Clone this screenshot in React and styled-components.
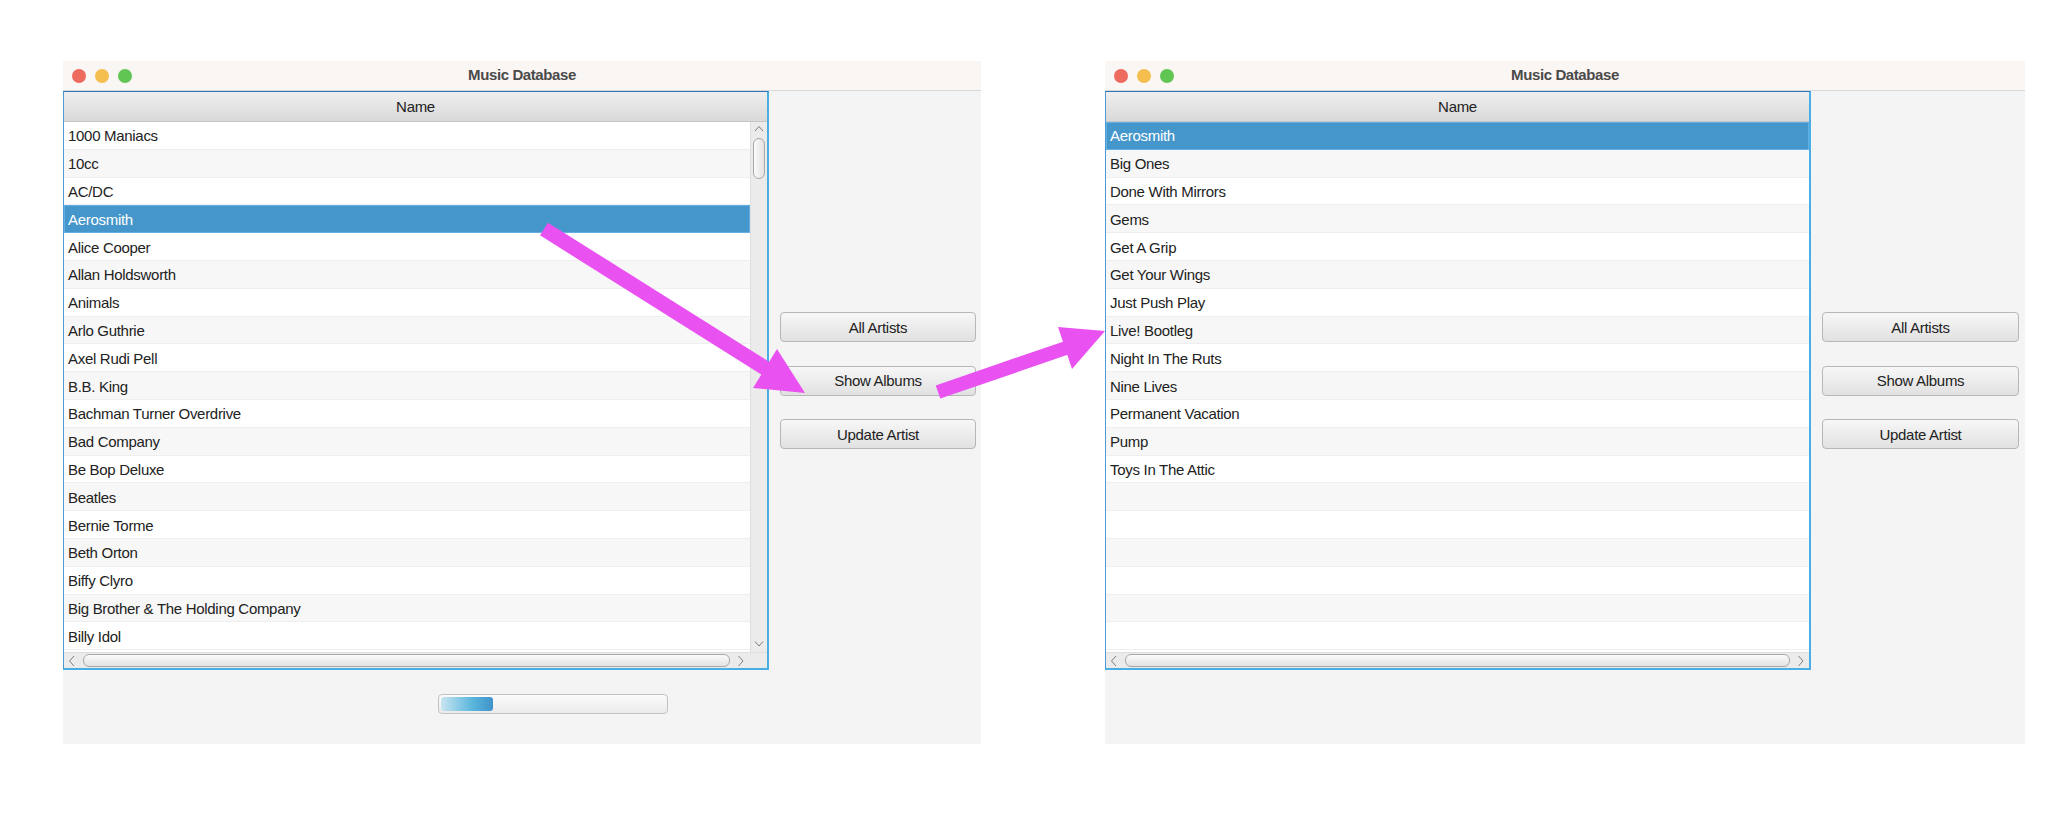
import React from 'react'
import styled, { createGlobalStyle } from 'styled-components'

const GlobalStyle = createGlobalStyle`
  html, body {
    margin: 0;
    padding: 0;
    background: #ffffff;
  }
  body {
    font-family: "Liberation Sans", Arial, sans-serif;
    color: #222;
  }
`

const Page = styled.div`
  position: relative;
  width: 2064px;
  height: 830px;
  box-sizing: border-box;
  padding: 61px 0 0 63px;
  display: flex;
  align-items: flex-start;
  gap: 124px;
`

const Window = styled.div`
  width: ${p => p.$width}px;
  height: 683px;
  background: #f4f4f4;
  display: flex;
  flex-direction: column;
`

const TitleBar = styled.div`
  height: 29px;
  border-bottom: 1px solid #d9d9d9;
  background: #faf6f3;
  display: grid;
  grid-template-columns: 1fr auto 1fr;
  align-items: center;
`

const Lights = styled.div`
  display: flex;
  gap: 9px;
  padding-left: 9px;
`

const Light = styled.span`
  width: 14px;
  height: 14px;
  border-radius: 50%;
  background: ${p => p.$color};
`

const Title = styled.div`
  font-size: 15px;
  font-weight: bold;
  color: #4a4a4a;
  letter-spacing: -0.4px;
  margin-top: -2px;
`

const Content = styled.div`
  height: 579px;
  display: flex;
`

const Table = styled.div`
  width: 706px;
  box-sizing: border-box;
  border-top: 1px solid #2f74b8;
  border-left: 1px solid #4c99d4;
  border-right: 2px solid #4aaee5;
  border-bottom: 2px solid #4aaee5;
  display: flex;
  flex-direction: column;
  background: #fff;
`

const Header = styled.div`
  height: 30px;
  box-sizing: border-box;
  border-bottom: 1px solid #c6c6c6;
  background: linear-gradient(#efefef, #d9d9d9);
  display: flex;
  align-items: center;
  justify-content: center;
  font-size: 15px;
  letter-spacing: -0.3px;
  color: #222;
`

const RowsArea = styled.div`
  flex: 1;
  display: flex;
  overflow: hidden;
`

const List = styled.div`
  flex: 1;
  overflow: hidden;
`

const Row = styled.div`
  height: 27.8px;
  box-sizing: border-box;
  padding-left: 4px;
  display: flex;
  align-items: center;
  font-size: 15px;
  letter-spacing: -0.3px;
  white-space: nowrap;
  color: ${p => (p.$selected ? '#fff' : '#222')};
  background: ${p => (p.$selected ? '#4597cb' : p.$odd ? '#f7f7f7' : '#ffffff')};
  box-shadow: ${p =>
    p.$selected ? 'inset 0 0 0 1px #63b1e2' : 'inset 0 -1px 0 #eeeeee'};
`

const VScroll = styled.div`
  width: 17px;
  background: #ebebeb;
  border-left: 1px solid #dedede;
  box-sizing: border-box;
  display: flex;
  flex-direction: column;
  align-items: center;
  padding: 3px 0 4px;
`

const VThumb = styled.div`
  width: 12px;
  height: 41px;
  margin-top: 5px;
  box-sizing: border-box;
  border: 1px solid #a9a9a9;
  border-radius: 6px;
  background: linear-gradient(90deg, #fbfbfb, #e2e2e2);
`

const Spacer = styled.div`
  flex: 1;
`

const HScroll = styled.div`
  height: 16px;
  box-sizing: border-box;
  background: #ebebeb;
  border-top: 1px solid #dedede;
  display: flex;
  align-items: center;
  padding: 0 ${p => (p.$corner ? 22 : 4)}px 0 4px;
  gap: 7px;
`

const HThumb = styled.div`
  flex: 1;
  height: 13px;
  box-sizing: border-box;
  border: 1px solid #a9a9a9;
  border-radius: 6px;
  background: linear-gradient(#fbfbfb, #e2e2e2);
`

const Side = styled.div`
  flex: 1;
  display: flex;
  flex-direction: column;
  justify-content: center;
  gap: 23.5px;
  padding: 0 ${p => p.$right}px 0 11px;
`

const Button = styled.div`
  height: 30px;
  box-sizing: border-box;
  border: 1px solid #b7b7b7;
  border-radius: 4px;
  background: linear-gradient(#f7f7f7, #e1e1e1);
  display: flex;
  align-items: center;
  justify-content: center;
  font-size: 15px;
  letter-spacing: -0.3px;
  color: #222;
`

const Bottom = styled.div`
  flex: 1;
  padding: 24px 0 0 375px;
`

const Progress = styled.div`
  width: 230px;
  height: 20px;
  box-sizing: border-box;
  border: 1px solid #c2c2c2;
  border-radius: 4px;
  background: linear-gradient(#fbfbfb, #ebebeb);
  padding: 2px;
`

const ProgressFill = styled.div`
  height: 100%;
  border-radius: 3px;
  background: linear-gradient(90deg, #c8e5f1, #5ab6dc 60%, #3f93c9);
`

const Overlay = styled.svg`
  position: absolute;
  left: 0;
  top: 0;
  pointer-events: none;
`

const Chevron = ({ dir }) => {
  const pts = {
    up: '1,6 5,1.5 9,6',
    down: '1,1.5 5,6 9,1.5',
    left: '6,1 1.5,6 6,11',
    right: '1.5,1 6,6 1.5,11',
  }[dir]
  const vertical = dir === 'up' || dir === 'down'
  return (
    <svg width={vertical ? 10 : 8} height={vertical ? 8 : 12} style={{ flexShrink: 0 }}>
      <polyline points={pts} fill="none" stroke="#7d7d7d" strokeWidth="1" />
    </svg>
  )
}

const artists = [
  '1000 Maniacs', '10cc', 'AC/DC', 'Aerosmith', 'Alice Cooper', 'Allan Holdsworth',
  'Animals', 'Arlo Guthrie', 'Axel Rudi Pell', 'B.B. King', 'Bachman Turner Overdrive',
  'Bad Company', 'Be Bop Deluxe', 'Beatles', 'Bernie Torme', 'Beth Orton', 'Biffy Clyro',
  'Big Brother & The Holding Company', 'Billy Idol',
]

const albums = [
  'Aerosmith', 'Big Ones', 'Done With Mirrors', 'Gems', 'Get A Grip', 'Get Your Wings',
  'Just Push Play', 'Live! Bootleg', 'Night In The Ruts', 'Nine Lives',
  'Permanent Vacation', 'Pump', 'Toys In The Attic', '', '', '', '', '', '',
]

function MusicWindow({ width, items, selected, scroll, progress, right }) {
  return (
    <Window $width={width}>
      <TitleBar>
        <Lights>
          <Light $color="#ed6a5e" />
          <Light $color="#f5bf4f" />
          <Light $color="#61c554" />
        </Lights>
        <Title>Music Database</Title>
        <div />
      </TitleBar>
      <Content>
        <Table>
          <Header>Name</Header>
          <RowsArea>
            <List>
              {items.map((name, i) => (
                <Row key={i} $odd={i % 2 === 1} $selected={i === selected}>
                  {name}
                </Row>
              ))}
            </List>
            {scroll && (
              <VScroll>
                <Chevron dir="up" />
                <VThumb />
                <Spacer />
                <Chevron dir="down" />
              </VScroll>
            )}
          </RowsArea>
          <HScroll $corner={scroll}>
            <Chevron dir="left" />
            <HThumb />
            <Chevron dir="right" />
          </HScroll>
        </Table>
        <Side $right={right}>
          <Button>All Artists</Button>
          <Button>Show Albums</Button>
          <Button>Update Artist</Button>
        </Side>
      </Content>
      <Bottom>
        {progress && (
          <Progress>
            <ProgressFill style={{ width: `${progress}%` }} />
          </Progress>
        )}
      </Bottom>
    </Window>
  )
}

export default function App() {
  return (
    <Page>
      <GlobalStyle />
      <MusicWindow width={918} items={artists} selected={3} scroll progress={23} right={5} />
      <MusicWindow width={920} items={albums} selected={0} right={6} />
      <Overlay width="2064" height="830">
        <g fill="#e951f1" stroke="none">
          <line x1="544" y1="229" x2="768" y2="370" stroke="#e951f1" strokeWidth="15" />
          <polygon points="777,349 753,388 805,393" />
          <line x1="938" y1="392" x2="1066" y2="348" stroke="#e951f1" strokeWidth="14" />
          <polygon points="1058,327 1072,369 1105,331" />
        </g>
      </Overlay>
    </Page>
  )
}
